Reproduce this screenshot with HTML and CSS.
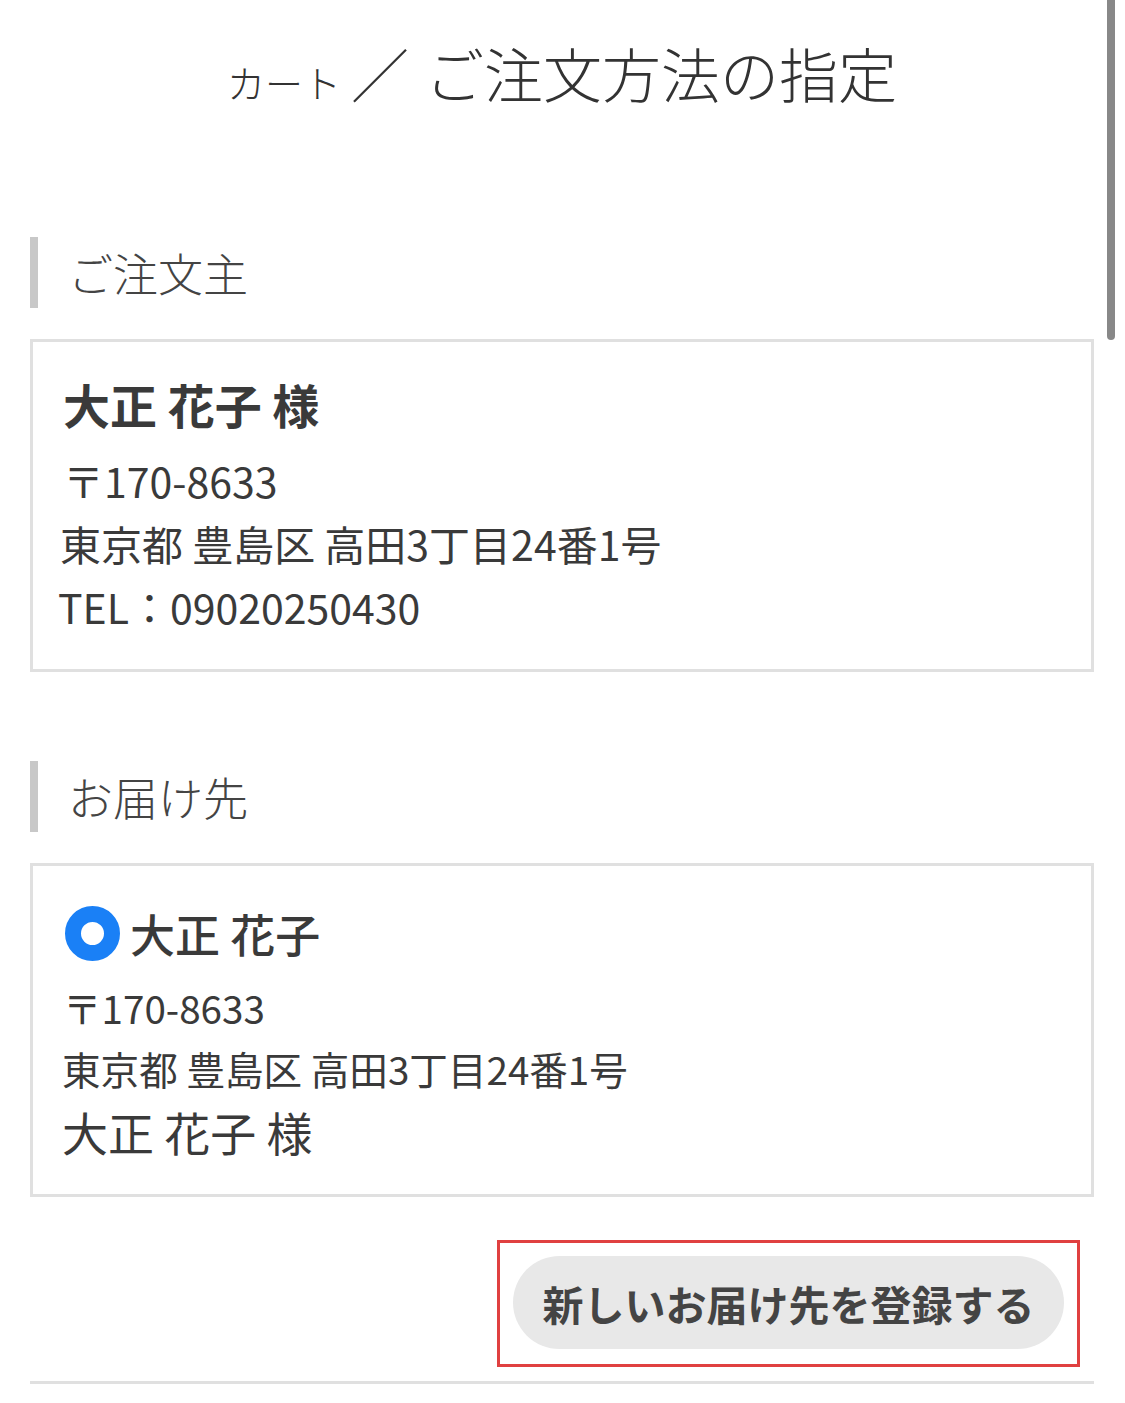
FILE: index.html
```html
<!DOCTYPE html>
<html>
<head>
    <title>ご注文方法の指定</title>
    <link rel="stylesheet" href="styles.css">
</head>
<body>
<div class="page">
    <h1 class="pageTitle">
        <span class="crumb">カート</span>
        <span class="slash">／</span>
        <span class="current">ご注文方法の指定</span>
    </h1>

    <h2 class="sectionTitle">ご注文主</h2>
    <div class="box orderer">
        <p class="name">大正 花子 様</p>
        <p class="line">〒170-8633</p>
        <p class="line">東京都 豊島区 高田3丁目24番1号</p>
        <p class="line tel">TEL：09020250430</p>
    </div>

    <h2 class="sectionTitle second">お届け先</h2>
    <div class="box delivery">
        <label class="pick">
            <span class="radio"></span>
            <span class="pickName">大正 花子</span>
        </label>
        <p class="line small">〒170-8633</p>
        <p class="line small">東京都 豊島区 高田3丁目24番1号</p>
        <p class="line recipient">大正 花子 様</p>
    </div>

    <div class="actions">
        <div class="highlight">
            <button class="addButton">新しいお届け先を登録する</button>
        </div>
    </div>
    <hr class="rule">
</div>
<div class="scrollThumb"></div>
</body>
</html>
```

FILE: styles.css
```css
html, body {
    margin: 0px;
    padding: 0px;
    background-color: #FFF;
    color: #444;
    font-family: "Noto Sans CJK JP", "Noto Sans", sans-serif;
}

.page {
    width: 1064px;
    margin-left: 30px;
    display: flex;
    flex-direction: column;
}

.pageTitle {
    margin: 0px;
    padding-top: 30px;
    height: 154px;
    box-sizing: border-box;
    display: flex;
    justify-content: center;
    align-items: baseline;
    font-weight: 300;
    color: #333;
}
.pageTitle .crumb {
    font-size: 38px;
    margin-left: 0px;
}
.pageTitle .slash {
    font-size: 58px;
    margin: 0px 16px 0px 10px;
}
.pageTitle .current {
    font-size: 59px;
}

.sectionTitle {
    margin: 83px 0px 0px 0px;
    padding-left: 30px;
    height: 71px;
    border-left: 8px solid #c8c8c8;
    display: flex;
    align-items: center;
    font-size: 45px;
    font-weight: 300;
    color: #444;
}
.sectionTitle.second {
    margin-top: 89px;
}

.box {
    margin-top: 31px;
    border: 3px solid #e0e0e0;
    padding: 32px 30px 31px 27px;
    display: flex;
    flex-direction: column;
}

.box p {
    margin: 0px;
}

.name {
    font-size: 47px;
    font-weight: 700;
    line-height: 60px;
    color: #3a3a3a;
    margin: 0px 0px 15px 3px !important;
}

.line {
    font-size: 41px;
    line-height: 63px;
    color: #3a3a3a;
}
.orderer .line:nth-child(2) {
    margin-left: 3px;
}
.orderer .tel {
    margin-left: -2px;
}

.delivery {
    padding-top: 37px;
    padding-bottom: 31px;
}

.pick {
    display: flex;
    align-items: center;
    gap: 10px;
    height: 60px;
    margin: 0px 0px 14px 5px;
}
.radio {
    width: 55px;
    height: 55px;
    box-sizing: border-box;
    border-radius: 50%;
    border: 16px solid #1a80f6;
    background-color: #FFF;
}
.pickName {
    font-size: 45px;
    font-weight: 500;
    color: #3a3a3a;
}

.line.small {
    font-size: 38.6px;
    line-height: 61px;
    margin-left: 2px;
}
.line.small:nth-of-type(1) {
    margin-left: 3px;
}
.line.recipient {
    font-size: 46px;
    line-height: 64px;
    margin-left: 2px;
}

.actions {
    display: flex;
    justify-content: flex-end;
    margin-top: 43px;
    padding-right: 14px;
}
.highlight {
    border: 3px solid #e04040;
    padding: 13px 13px 15px 13px;
}
.addButton {
    display: block;
    width: 551px;
    height: 93px;
    border: none;
    border-radius: 47px;
    background-color: #e8e8e8;
    font-family: "Noto Sans CJK JP", "Noto Sans", sans-serif;
    font-size: 41px;
    font-weight: 700;
    color: #444;
    padding: 0px;
}

.rule {
    margin: 14px 0px 0px 0px;
    border: none;
    border-top: 3px solid #e0e0e0;
}

.scrollThumb {
    position: absolute;
    top: 0px;
    left: 1107px;
    width: 8px;
    height: 340px;
    border-radius: 0px 0px 4px 4px;
    background-color: #888;
}
```
